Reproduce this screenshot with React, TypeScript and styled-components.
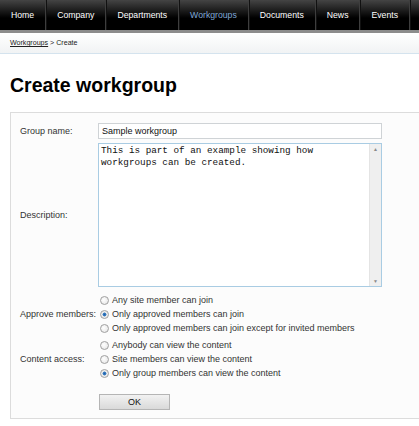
import styled, { createGlobalStyle } from "styled-components"

const menu = ['Home', 'Company', 'Departments', 'Workgroups', 'Documents', 'News', 'Events']

const approveOptions = [
  'Any site member can join',
  'Only approved members can join',
  'Only approved members can join except for invited members',
]

const accessOptions = [
  'Anybody can view the content',
  'Site members can view the content',
  'Only group members can view the content',
]

const GlobalStyle = createGlobalStyle`
html, body {
  margin: 0;
  padding: 0;
  background: #ffffff;
  overflow: hidden;
  font-family: "Liberation Sans", Arial, sans-serif;
}
`

const App = () => {
  return (
    <>
      <GlobalStyle />
      <Nav>
        {menu.map((m) => (
          <NavItem key={m} $active={m === 'Workgroups'}>{m}</NavItem>
        ))}
      </Nav>
      <Breadcrumb>
        <CrumbLink>Workgroups</CrumbLink> &gt; Create
      </Breadcrumb>
      <Title>Create workgroup</Title>
      <Panel>
        <Row>
          <Label>Group name:</Label>
          <TextInput defaultValue="Sample workgroup" />
        </Row>
        <Row $top={4}>
          <Label>Description:</Label>
          <AreaBox>
            <Area defaultValue={'This is part of an example showing how\nworkgroups can be created.'} />
            <Scrollbar>
              <Arrow>▲</Arrow>
              <Arrow>▼</Arrow>
            </Scrollbar>
          </AreaBox>
        </Row>
        <Row $top={6}>
          <Label>Approve members:</Label>
          <RadioList>
            {approveOptions.map((o, i) => (
              <RadioRow key={o}>
                <Radio $checked={i === 1} />
                {o}
              </RadioRow>
            ))}
          </RadioList>
        </Row>
        <Row $top={3}>
          <Label>Content access:</Label>
          <RadioList>
            {accessOptions.map((o, i) => (
              <RadioRow key={o}>
                <Radio $checked={i === 2} />
                {o}
              </RadioRow>
            ))}
          </RadioList>
        </Row>
        <Row $top={14}>
          <Label />
          <OkButton>OK</OkButton>
        </Row>
      </Panel>
    </>
  )
}

export default App

const Nav = styled.div`
display: flex;
height: 30px;
background: linear-gradient(#444444 0%, #1c1c1c 35%, #000000 60%, #000000 100%);
border-bottom: 3px solid #8c8c8c;
`

const NavItem = styled.div<{ $active?: boolean }>`
display: flex;
align-items: center;
padding: 0 11px;
font-size: 8.7px;
color: ${p => p.$active ? '#7fa7d6' : '#ffffff'};
border-right: 1px solid #3e3e3e;
box-shadow: 1px 0 0 #111111;
`

const Breadcrumb = styled.div`
height: 20px;
display: flex;
align-items: center;
padding-left: 10px;
font-size: 7.1px;
color: #222222;
background: linear-gradient(#ffffff, #f1f3f4);
border-bottom: 1px solid #d4e3ee;
white-space: pre;
`

const CrumbLink = styled.span`
text-decoration: underline;
`

const Title = styled.h1`
margin: 19px 0 0 10px;
font-size: 19.5px;
font-weight: bold;
color: #000000;
line-height: 24px;
`

const Panel = styled.div`
margin: 15px 0 0 10px;
padding: 10px 0 8px 9px;
background: #fcfcfc;
border: 1px solid #dcdcdc;
border-right: none;
`

const Row = styled.div<{ $top?: number }>`
display: flex;
align-items: center;
margin-top: ${p => p.$top || 0}px;
`

const Label = styled.div`
width: 78px;
flex-shrink: 0;
font-size: 9px;
color: #333333;
`

const TextInput = styled.input`
width: 284px;
height: 16px;
box-sizing: border-box;
border: 1px solid #cfd3d6;
background: #ffffff;
padding: 0 3px;
font-family: "Liberation Sans", Arial, sans-serif;
font-size: 9px;
color: #111111;
outline: none;
`

const AreaBox = styled.div`
display: flex;
width: 284px;
height: 144px;
box-sizing: border-box;
border: 1px solid #a9cce3;
background: #ffffff;
`

const Area = styled.textarea`
flex: 1;
border: none;
resize: none;
outline: none;
padding: 1px 2px;
margin: 0;
font-family: "Liberation Mono", "Courier New", monospace;
font-size: 9.3px;
line-height: 11.5px;
color: #111111;
background: transparent;
overflow: hidden;
`

const Scrollbar = styled.div`
width: 11px;
display: flex;
flex-direction: column;
justify-content: space-between;
align-items: center;
background: #efefef;
border-left: 1px solid #e4e4e4;
padding: 2px 0;
`

const Arrow = styled.span`
font-size: 5px;
color: #8a8a8a;
line-height: 6px;
`

const RadioList = styled.div`
display: flex;
flex-direction: column;
`

const RadioRow = styled.div`
display: flex;
align-items: center;
height: 14px;
font-size: 9px;
color: #333333;
padding-left: 2px;
`

const Radio = styled.span<{ $checked?: boolean }>`
width: 9px;
height: 9px;
box-sizing: border-box;
border-radius: 50%;
border: 1px solid #a0a0a0;
margin-right: 3px;
background: ${p => p.$checked
  ? 'radial-gradient(circle, #1f5fa8 0%, #3f84c8 35%, #e8e8e8 45%, #f6f6f6 100%)'
  : 'radial-gradient(circle at 40% 40%, #ffffff 0%, #e2e2e2 100%)'};
`

const OkButton = styled.button`
width: 71px;
height: 16px;
margin-left: 1px;
padding: 0;
border: 1px solid #b5b5b5;
background: linear-gradient(#f2f2f2, #d9d9d9);
font-family: "Liberation Sans", Arial, sans-serif;
font-size: 9px;
color: #111111;
`
